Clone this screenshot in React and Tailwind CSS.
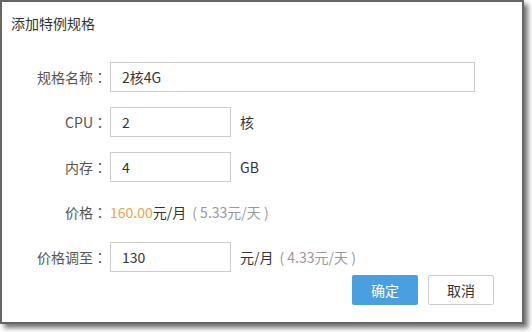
import React from "react";

const FONT = { fontFamily: '"Noto Sans CJK SC", "Noto Sans", sans-serif' };

function Field({ label, children }) {
  return (
    <div className="flex items-center h-[30px]">
      <div className="w-[108px] pr-[3px] text-right text-[14px] text-[#555]">
        {label}
        <span className="font-['Noto_Sans_CJK_JP',sans-serif]">：</span>
      </div>
      {children}
    </div>
  );
}

function Input({ value, wide }) {
  return (
    <div className={`${wide ? "w-[365px]" : "w-[121px]"} h-[30px] border border-[#ccc] flex items-center px-[11px] text-[14px] text-[#333]`}>
      {value}
    </div>
  );
}

export default function App() {
  return (
    <div className="w-[532px] h-[332px] bg-white" style={FONT}>
      <div className="w-[524px] h-[324px] bg-white border-2 border-[#666] shadow-[4px_4px_5px_rgba(0,0,0,0.55)] flex flex-col">
        <div className="pl-[9px] pt-[11px] text-[14px] text-[#333] leading-[20px]">添加特例规格</div>
        <div className="mt-[29px] flex flex-col gap-[15px]">
          <Field label="规格名称">
            <Input value="2核4G" wide />
          </Field>
          <Field label="CPU">
            <Input value="2" />
            <span className="ml-[9px] text-[14px] text-[#333]">核</span>
          </Field>
          <Field label="内存">
            <Input value="4" />
            <span className="ml-[9px] text-[14px] text-[#333]">GB</span>
          </Field>
          <Field label="价格">
            <span className="text-[14px] text-[#f5a346]">160.00</span>
            <span className="text-[14px] text-[#333]">元/月</span>
            <span className="ml-[6px] text-[14px] text-[#999]">( 5.33元/天 )</span>
          </Field>
          <Field label="价格调至">
            <Input value="130" />
            <span className="ml-[9px] text-[14px] text-[#333]">元/月</span>
            <span className="ml-[6px] text-[14px] text-[#999]">( 4.33元/天 )</span>
          </Field>
        </div>
        <div className="mt-[3px] flex justify-end gap-[10px] pr-[28px]">
          <button className="w-[66px] h-[30px] rounded-[2px] bg-[#4a9fe0] text-white text-[14px]">确定</button>
          <button className="w-[66px] h-[30px] rounded-[2px] bg-white border border-[#ccc] text-[#333] text-[14px]">取消</button>
        </div>
      </div>
    </div>
  );
}
